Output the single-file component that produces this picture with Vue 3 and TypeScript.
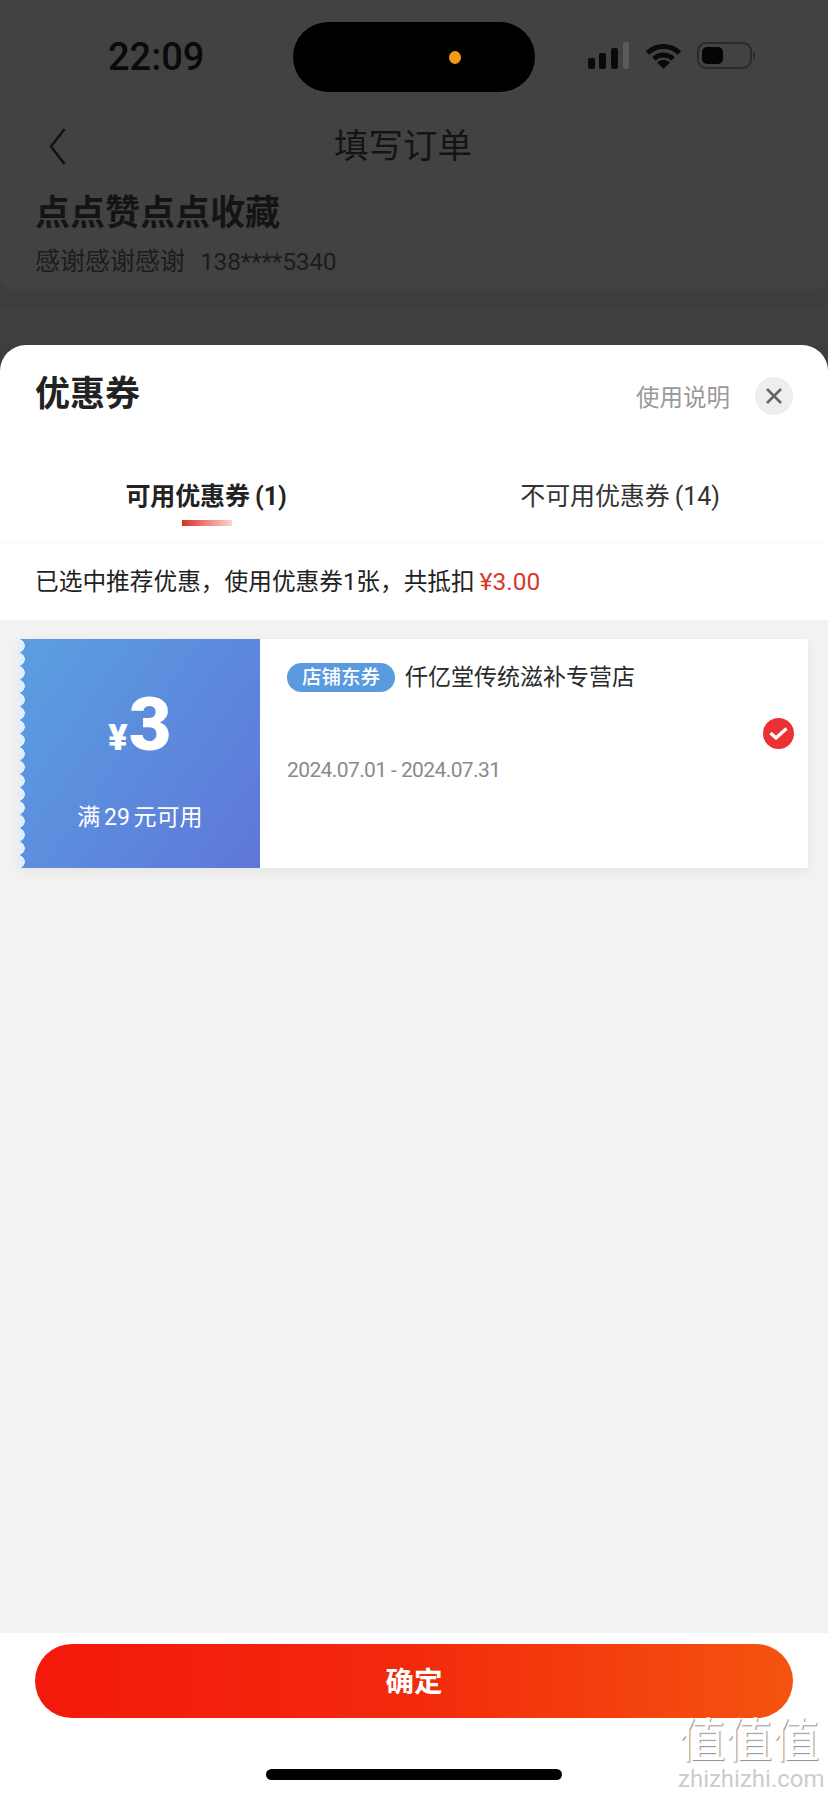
<script setup lang="ts">
const tabs = [
  { label: '可用优惠券 (1)', active: true },
  { label: '不可用优惠券 (14)', active: false },
]
</script>

<template>
  <div class="page">
    <!-- dimmed order page behind the sheet -->
    <div class="backdrop">
      <div class="addr-card">
        <div class="status">
          <span class="time">22:09</span>
          <div class="island"><i class="cam-dot"></i></div>
          <svg class="signal" width="42" height="28" viewBox="0 0 42 28">
            <rect x="0" y="16" width="7" height="11" rx="2" fill="#0a0a0a" />
            <rect x="11" y="11" width="7" height="16" rx="2" fill="#0a0a0a" />
            <rect x="23" y="6" width="7" height="21" rx="2" fill="#0a0a0a" />
            <rect x="35" y="0" width="6" height="27" rx="2" fill="#5a5a5a" />
          </svg>
          <svg class="wifi" width="37" height="28" viewBox="0 0 37 28">
            <path d="M2.5 11 A23 23 0 0 1 34.5 11" fill="none" stroke="#0a0a0a" stroke-width="5" />
            <path d="M9 17 A13.5 13.5 0 0 1 28 17" fill="none" stroke="#0a0a0a" stroke-width="5" />
            <path d="M18.5 27 L12 20.5 A9 9 0 0 1 25 20.5 Z" fill="#0a0a0a" />
          </svg>
          <svg class="battery" width="60" height="28" viewBox="0 0 60 28">
            <rect x="1" y="1" width="53" height="25" rx="8" fill="none" stroke="#2a2a2a" stroke-width="2" />
            <rect x="5" y="5" width="21" height="17" rx="5" fill="#050505" />
            <path d="M56 10 C59 11 59 16 56 18 Z" fill="#2a2a2a" />
          </svg>
        </div>
        <div class="nav">
          <svg class="back" width="17" height="37" viewBox="0 0 17 37">
            <path d="M15.5 1 L2 18.5 L15.5 36" fill="none" stroke="#111" stroke-width="2.4" />
          </svg>
          <span class="nav-title">填写订单</span>
        </div>
        <div class="addr-name">点点赞点点收藏</div>
        <div class="addr-contact"><span>感谢感谢感谢</span><span class="phone">138****5340</span></div>
      </div>
      <div class="next-card"></div>
    </div>

    <!-- coupon sheet -->
    <div class="sheet">
      <div class="sheet-head">
        <span class="sheet-title">优惠券</span>
        <div class="head-right">
          <span class="help">使用说明</span>
          <span class="close">
            <svg width="18" height="18" viewBox="0 0 18 18">
              <path d="M2 2 L16 16 M16 2 L2 16" stroke="#666" stroke-width="2.6" fill="none" />
            </svg>
          </span>
        </div>
      </div>

      <div class="tabs">
        <div v-for="t in tabs" :key="t.label" class="tab" :class="{ active: t.active }">
          <span class="tab-label">{{ t.label }}</span>
          <i class="tab-bar"></i>
        </div>
      </div>

      <div class="summary">已选中推荐优惠，使用优惠券1张，共抵扣 <span class="red">¥3.00</span></div>

      <div class="list">
        <div class="coupon">
          <i class="scallop"></i>
          <div class="coupon-left">
            <div class="amount"><span class="yen">¥</span><span class="num">3</span></div>
            <div class="cond">满 29 元可用</div>
          </div>
          <div class="coupon-body">
            <div class="coupon-info">
              <div class="coupon-top">
                <span class="tag">店铺东券</span>
                <span class="store">仟亿堂传统滋补专营店</span>
              </div>
              <div class="dates">2024.07.01 - 2024.07.31</div>
            </div>
            <span class="check">
              <svg width="19" height="15" viewBox="0 0 19 15">
                <path d="M1.5 7 L7 12 L17.5 2.5" fill="none" stroke="#fff" stroke-width="3.4" />
              </svg>
            </span>
          </div>
        </div>
      </div>

      <div class="footer">
        <div class="btn">确定</div>
        <div class="home"></div>
      </div>
    </div>

    <div class="watermark">
      <div class="wm-big">值值值</div>
      <div class="wm-small">zhizhizhi.com</div>
    </div>
  </div>
</template>

<style scoped>
.page {
  position: relative;
  width: 828px;
  height: 1795px;
  display: flex;
  flex-direction: column;
  overflow: hidden;
  background: #3e3e3e;
  color: #222;
  font-family: Roboto, "Noto Sans CJK SC", sans-serif;
}

.backdrop {
  height: 345px;
  flex: none;
  display: flex;
  flex-direction: column;
  gap: 18px;
  margin-bottom: -24px;
  padding-bottom: 24px;
  box-sizing: content-box;
}

.addr-card {
  height: 290px;
  flex: none;
  background: #424242;
  border-radius: 0 0 14px 14px;
}

.next-card {
  flex: 1;
  background: #404040;
}

.status {
  height: 70px;
  padding-top: 22px;
  display: flex;
  align-items: flex-start;
}

.time {
  margin: 15px 0 0 108px;
  width: 98px;
  font-size: 38px;
  line-height: 40px;
  font-weight: 500;
  color: #0a0a0a;
}

.island {
  margin-left: 87px;
  width: 242px;
  height: 70px;
  border-radius: 35px;
  background: #000;
  display: flex;
  align-items: center;
}

.cam-dot {
  margin-left: 156px;
  width: 12px;
  height: 13px;
  border-radius: 50%;
  background: #f49b16;
}

.signal {
  margin: 20px 0 0 53px;
}

.wifi {
  margin: 20px 0 0 15px;
}

.battery {
  margin: 20px 0 0 15px;
}

.nav {
  margin-top: 36px;
  height: 37px;
  display: flex;
  align-items: center;
}

.back {
  margin-left: 49px;
}

.nav-title {
  margin-left: 268px;
  font-size: 34.5px;
  line-height: 37px;
  color: #141414;
}

.addr-name {
  margin: 29px 0 0 35px;
  font-size: 35px;
  line-height: 40px;
  font-weight: 700;
  color: #141414;
}

.addr-contact {
  margin: 13px 0 0 35px;
  display: flex;
  align-items: center;
  gap: 15px;
  font-size: 25px;
  line-height: 30px;
  color: #1c1c1c;
}

.phone {
  font-size: 24.5px;
  letter-spacing: -0.2px;
}

.sheet {
  position: relative;
  flex: 1;
  display: flex;
  flex-direction: column;
  border-radius: 26px 26px 0 0;
  background: #fff;
  overflow: hidden;
}

.sheet-head {
  height: 100px;
  flex: none;
  padding: 26px 35px 0;
  display: flex;
  justify-content: space-between;
  align-items: flex-start;
  box-sizing: border-box;
}

.sheet-title {
  font-size: 35px;
  line-height: 48px;
  font-weight: 700;
  color: #222;
}

.head-right {
  margin-top: 6px;
  display: flex;
  align-items: center;
  gap: 25px;
}

.help {
  font-size: 23.5px;
  color: #999;
}

.close {
  width: 38px;
  height: 38px;
  border-radius: 50%;
  background: #eee;
  display: flex;
  align-items: center;
  justify-content: center;
}

.tabs {
  height: 98px;
  flex: none;
  display: grid;
  grid-template-columns: 1fr 1fr;
  border-bottom: 1px solid #f6f6f6;
  box-sizing: border-box;
}

.tab {
  padding-top: 34px;
  display: flex;
  flex-direction: column;
  align-items: center;
}

.tab-label {
  margin-left: -2px;
  font-size: 25px;
  line-height: 36px;
  word-spacing: -1px;
  letter-spacing: -0.1px;
  color: #333;
}

.tab.active .tab-label {
  font-weight: 700;
  color: #222;
}

.tab-bar {
  margin-top: 5px;
  width: 50px;
  height: 6px;
  visibility: hidden;
}

.tab.active .tab-bar {
  visibility: visible;
  background: linear-gradient(90deg, #d8301f 0%, #ee7c72 45%, #f9d5d1 100%);
}

.summary {
  height: 77px;
  flex: none;
  padding-left: 35px;
  font-size: 23.7px;
  line-height: 78px;
  word-spacing: -1px;
  color: #222;
  white-space: nowrap;
}

.red {
  color: #d8382c;
  font-size: 24.5px;
}

.list {
  flex: 1;
  padding: 19px 20px;
  background: #f2f2f2;
}

.coupon {
  position: relative;
  height: 229px;
  display: flex;
  background: #fff;
  box-shadow: 0 4px 12px rgba(0, 0, 0, 0.05);
}

.scallop {
  position: absolute;
  left: -2px;
  top: 0;
  width: 8px;
  height: 229px;
  background: radial-gradient(circle at 0 50%, #e4effb 6.5px, transparent 7px) 0 0 / 8px 13.5px repeat-y;
}

.coupon-left {
  width: 240px;
  flex: none;
  display: flex;
  flex-direction: column;
  align-items: center;
  background: linear-gradient(125deg, #5a9fe2 0%, #5f77d8 100%);
  color: #fff;
}

.amount {
  margin-top: 46px;
  height: 80px;
  display: flex;
  align-items: baseline;
  justify-content: center;
}

.yen {
  font-size: 36px;
  line-height: 80px;
  font-weight: 900;
}

.num {
  margin-left: 1px;
  font-size: 74px;
  line-height: 80px;
  font-weight: 900;
}

.cond {
  margin-top: 38px;
  font-size: 23px;
  line-height: 30px;
  word-spacing: -2px;
  white-space: nowrap;
}

.coupon-body {
  flex: 1;
  display: flex;
  justify-content: space-between;
  align-items: flex-start;
  padding: 24px 14px 0 27px;
}

.coupon-top {
  display: flex;
  align-items: center;
  gap: 10px;
}

.tag {
  width: 108px;
  height: 29px;
  border-radius: 15px;
  background: #5a9ade;
  color: #fff;
  font-size: 19.5px;
  line-height: 29px;
  font-weight: 500;
  text-align: center;
}

.store {
  font-size: 23px;
  line-height: 29px;
  color: #2a2a2a;
}

.dates {
  margin-top: 66px;
  font-size: 21px;
  line-height: 24px;
  letter-spacing: -0.6px;
  color: #8a8a8a;
}

.check {
  margin-top: 55px;
  width: 31px;
  height: 31px;
  border-radius: 50%;
  background: #ea3232;
  display: flex;
  align-items: center;
  justify-content: center;
}

.footer {
  height: 162px;
  flex: none;
  padding: 11px 35px 0;
  display: flex;
  flex-direction: column;
  align-items: center;
  background: #fff;
  box-sizing: border-box;
}

.btn {
  width: 100%;
  height: 74px;
  border-radius: 37px;
  background: linear-gradient(90deg, #f3190c 0%, #f32a0c 50%, #f4540f 100%);
  color: #fff;
  font-size: 28.5px;
  font-weight: 700;
  line-height: 77px;
  text-align: center;
}

.home {
  margin-top: 51px;
  width: 296px;
  height: 11px;
  border-radius: 6px;
  background: #000;
}

.watermark {
  position: absolute;
  right: 8px;
  bottom: 4px;
  width: 142px;
  text-align: center;
  pointer-events: none;
}

.wm-big {
  font-size: 47px;
  line-height: 52px;
  color: #fff;
  text-shadow: 1px 1px 1px rgba(0, 0, 0, 0.45);
  white-space: nowrap;
}

.wm-small {
  font-size: 24px;
  line-height: 24px;
  color: #ccc;
}
</style>
